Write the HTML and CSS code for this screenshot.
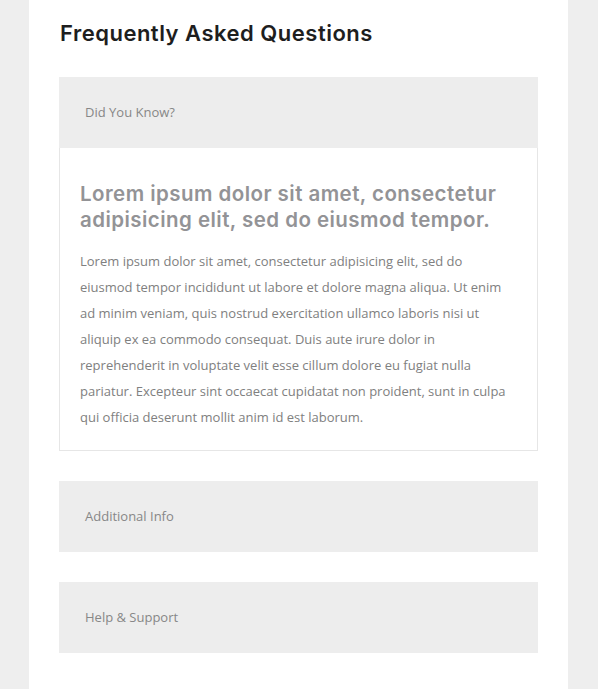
FILE: index.html
```html
<!DOCTYPE html>
<html>
<head>
<meta charset="utf-8">
<link rel="stylesheet" href="styles.css">
</head>
<body>
<div class="page">
  <h1 class="title">Frequently Asked Questions</h1>
  <div class="faq">
    <div class="item open">
      <div class="item-head">Did You Know?</div>
      <div class="item-body">
        <h2 class="body-title">Lorem ipsum dolor sit amet, consectetur adipisicing elit, sed do eiusmod tempor.</h2>
        <p class="body-text">Lorem ipsum dolor sit amet, consectetur adipisicing elit, sed do eiusmod tempor incididunt ut labore et dolore magna aliqua. Ut enim ad minim veniam, quis nostrud exercitation ullamco laboris nisi ut aliquip ex ea commodo consequat. Duis aute irure dolor in reprehenderit in voluptate velit esse cillum dolore eu fugiat nulla pariatur. Excepteur sint occaecat cupidatat non proident, sunt in culpa qui officia deserunt mollit anim id est laborum.</p>
      </div>
    </div>
    <div class="item">
      <div class="item-head">Additional Info</div>
    </div>
    <div class="item">
      <div class="item-head">Help &amp; Support</div>
    </div>
  </div>
</div>
</body>
</html>
```
FILE: styles.css
```css
html, body {
  margin: 0;
  padding: 0;
  background: #eeeeee;
}
.page {
  margin: 0 30px 0 29px;
  background: #ffffff;
  padding: 18px 30px 40px 30px;
  min-height: 689px;
  box-sizing: border-box;
}
.title {
  margin: 0 0 0 1px;
  font-family: "Inter", "DejaVu Sans", sans-serif;
  font-weight: 600;
  font-size: 22px;
  line-height: 30px;
  color: #1e1e1e;
  letter-spacing: 0.5px;
}
.faq {
  margin-top: 29px;
  display: flex;
  flex-direction: column;
  gap: 30px;
}
.item-head {
  background: #ededed;
  padding: 26px 26px;
  font-family: "Open Sans", sans-serif;
  font-size: 13px;
  line-height: 19px;
  color: #878787;
}
.item-body {
  border: 1px solid #e6e6e6;
  border-top: none;
  padding: 33px 20px 20px 20px;
}
.body-title {
  margin: 0;
  font-family: "Inter", "DejaVu Sans", sans-serif;
  font-weight: 600;
  font-size: 20.5px;
  line-height: 26px;
  color: #939396;
  letter-spacing: 0.45px;
}
.body-text {
  margin: 15px 0 0 0;
  font-family: "Open Sans", sans-serif;
  font-size: 13px;
  line-height: 26px;
  color: #808080;
}
```
